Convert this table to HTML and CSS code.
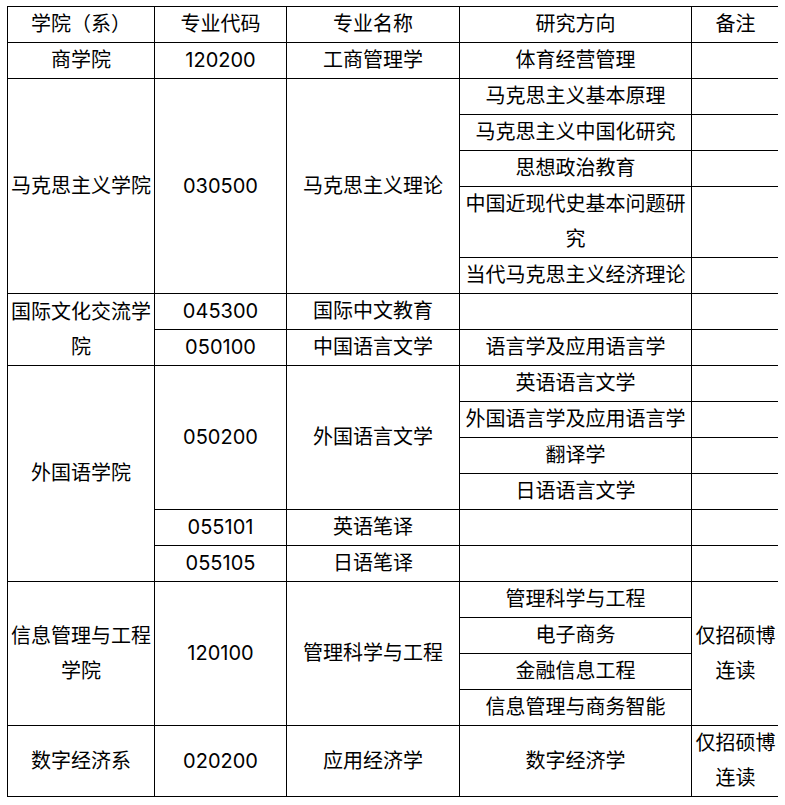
FILE: index.html
```html
<!DOCTYPE html>
<html lang="zh-CN">
<head>
<meta charset="utf-8">
<title>专业目录</title>
<link rel="stylesheet" href="styles.css">
</head>
<body>
<table class="grid">
  <colgroup>
    <col class="c1"><col class="c2"><col class="c3"><col class="c4"><col class="c5">
  </colgroup>
  <tr><td>学院（系）</td><td>专业代码</td><td>专业名称</td><td>研究方向</td><td>备注</td></tr>
  <tr><td>商学院</td><td>120200</td><td>工商管理学</td><td>体育经营管理</td><td></td></tr>
  <tr><td rowspan="5">马克思主义学院</td><td rowspan="5">030500</td><td rowspan="5">马克思主义理论</td><td>马克思主义基本原理</td><td></td></tr>
  <tr><td>马克思主义中国化研究</td><td></td></tr>
  <tr><td>思想政治教育</td><td></td></tr>
  <tr><td>中国近现代史基本问题研究</td><td></td></tr>
  <tr><td>当代马克思主义经济理论</td><td></td></tr>
  <tr><td rowspan="2">国际文化交流学院</td><td>045300</td><td>国际中文教育</td><td></td><td></td></tr>
  <tr><td>050100</td><td>中国语言文学</td><td>语言学及应用语言学</td><td></td></tr>
  <tr><td rowspan="6">外国语学院</td><td rowspan="4">050200</td><td rowspan="4">外国语言文学</td><td>英语语言文学</td><td></td></tr>
  <tr><td>外国语言学及应用语言学</td><td></td></tr>
  <tr><td>翻译学</td><td></td></tr>
  <tr><td>日语语言文学</td><td></td></tr>
  <tr><td>055101</td><td>英语笔译</td><td></td><td></td></tr>
  <tr><td>055105</td><td>日语笔译</td><td></td><td></td></tr>
  <tr><td rowspan="4">信息管理与工程学院</td><td rowspan="4">120100</td><td rowspan="4">管理科学与工程</td><td>管理科学与工程</td><td rowspan="4">仅招硕博连读</td></tr>
  <tr><td>电子商务</td></tr>
  <tr><td>金融信息工程</td></tr>
  <tr><td>信息管理与商务智能</td></tr>
  <tr><td>数字经济系</td><td>020200</td><td>应用经济学</td><td>数字经济学</td><td>仅招硕博连读</td></tr>
</table>
</body>
</html>
```

FILE: styles.css
```css
html, body {
  background: #ffffff;
}
body {
  margin: 6px 7px;
  font-family: "Inter", "Noto Sans CJK SC", sans-serif;
  font-size: 20px;
  color: #000000;
}
.grid {
  border-collapse: collapse;
  table-layout: fixed;
  width: 773px;
}
.c1 { width: 147px; }
.c2 { width: 132px; }
.c3 { width: 173px; }
.c4 { width: 232px; }
.c5 { width: 88px; }
.grid td {
  border: 1px solid #000000;
  padding: 0 3px;
  line-height: 35px;
  text-align: center;
  vertical-align: middle;
  word-break: break-all;
}
```
